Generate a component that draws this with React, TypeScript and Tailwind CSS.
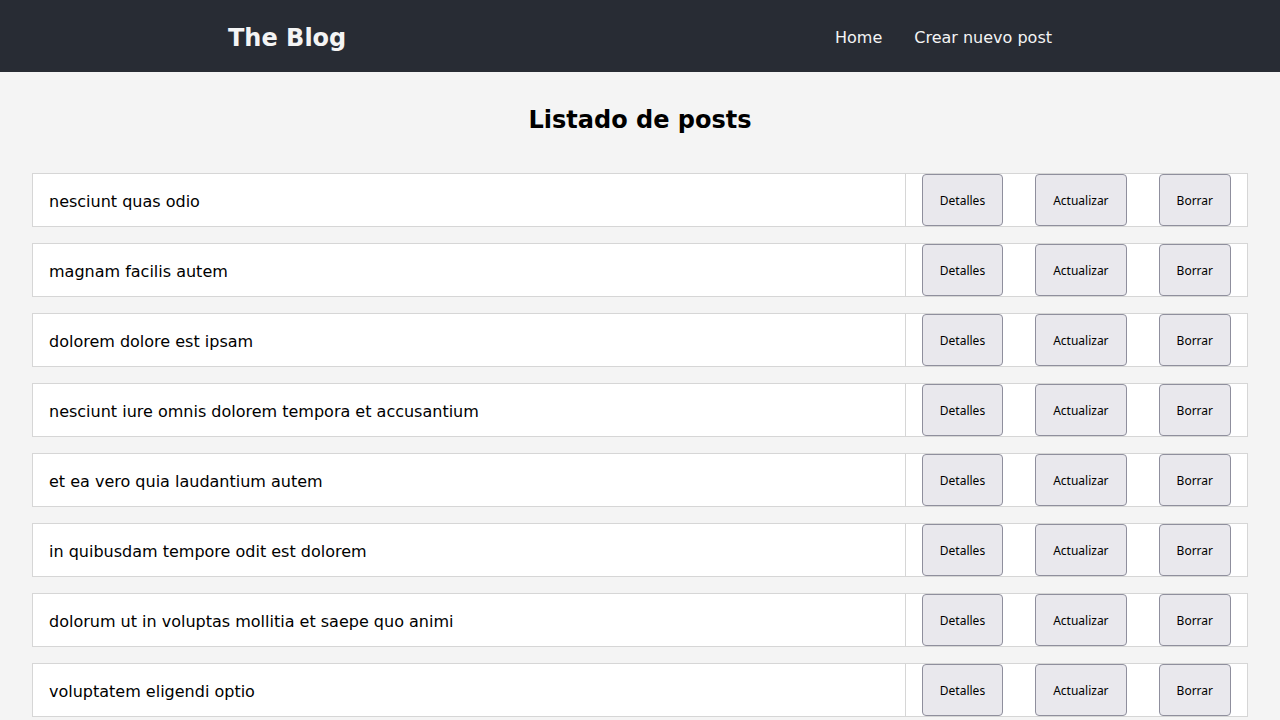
import React from 'react';

const posts = [
  'nesciunt quas odio',
  'magnam facilis autem',
  'dolorem dolore est ipsam',
  'nesciunt iure omnis dolorem tempora et accusantium',
  'et ea vero quia laudantium autem',
  'in quibusdam tempore odit est dolorem',
  'dolorum ut in voluptas mollitia et saepe quo animi',
  'voluptatem eligendi optio',
  'eveniet quod temporibus',
];

const btn =
  "h-[52px] px-[17px] pt-[2px] rounded-[4px] border border-[#8f8f9d] bg-[#e9e8ed] text-[12px] text-black font-['Noto_Sans',sans-serif]";

export default function App() {
  return (
    <div className="min-h-screen bg-[#f4f4f4] font-['DejaVu_Sans',sans-serif] text-black">
      {/* Navbar */}
      <header className="h-[72px] bg-[#282c34] flex items-center pt-[3px]">
        <div className="w-[1280px] flex items-center pl-[228px] pr-[228px]">
          <h1 className="text-[24px] font-bold text-[#f4f4f4]">The Blog</h1>
          <nav className="ml-auto flex gap-8 text-[16px] text-[#f4f4f4]">
            <a href="#">Home</a>
            <a href="#">Crear nuevo post</a>
          </nav>
        </div>
      </header>

      {/* List */}
      <main className="px-8 pt-[30px]">
        <h2 className="text-center text-[24px] font-bold mb-[35px]">Listado de posts</h2>
        <ul className="flex flex-col gap-4">
          {posts.map((title) => (
            <li key={title} className="flex h-[54px] bg-white border border-[#d6d6d6]">
              <div className="flex-1 flex items-center pl-4 pt-[3px] text-[16px] border-r border-[#d6d6d6]">
                {title}
              </div>
              <div className="flex items-center pl-4 pr-4 gap-8">
                <button className={btn}>Detalles</button>
                <button className={btn}>Actualizar</button>
                <button className={btn}>Borrar</button>
              </div>
            </li>
          ))}
        </ul>
      </main>
    </div>
  );
}
